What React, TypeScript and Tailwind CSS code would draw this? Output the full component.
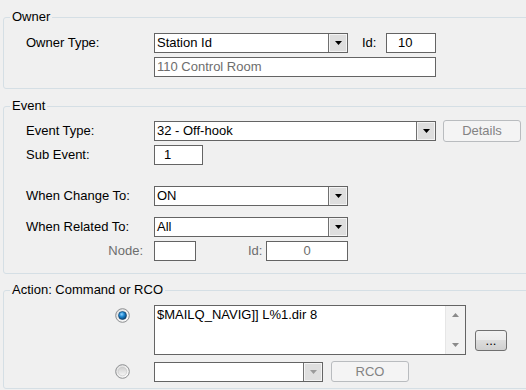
import React from 'react';

// small down arrow used by combo boxes and the scroll bar
const Arrow = ({ up = false, color = '#000' }: { up?: boolean; color?: string }) => (
  <svg width="7" height="4" viewBox="0 0 7 4" className="block">
    {up ? <path d="M0 4 L3.5 0 L7 4 Z" fill={color} /> : <path d="M0 0 L7 0 L3.5 4 Z" fill={color} />}
  </svg>
);

const ComboBox = ({ value, width, disabled = false }: { value: string; width: string; disabled?: boolean }) => (
  <div className={`${width} h-[20px] flex border border-[#646464] bg-white`}>
    <div className="flex-1 pl-[2px] leading-[18px] whitespace-nowrap overflow-hidden">{value}</div>
    <div className="w-[19px] h-full border-l border-[#707070] bg-[#dedede] shadow-[inset_0_0_0_1px_#f4f4f4] flex items-center justify-center">
      <Arrow color={disabled ? '#9a9a9a' : '#000'} />
    </div>
  </div>
);

const TextBox = ({ value, width, className = '' }: { value: string; width: string; className?: string }) => (
  <div className={`${width} h-[20px] border border-[#646464] bg-white leading-[18px] whitespace-nowrap overflow-hidden ${className}`}>
    {value}
  </div>
);

const DisabledButton = ({ label, h }: { label: string; h: string }) => (
  <div className={`w-[78px] ${h} rounded-[3px] border border-[#b9bcbf] bg-[#f4f4f4] text-[#838383] flex items-center justify-center`}>
    {label}
  </div>
);

const Radio = ({ checked }: { checked: boolean }) => (
  <svg width="15" height="15" viewBox="0 0 15 15" className="block">
    <defs>
      <linearGradient id={checked ? 'rg-on' : 'rg-off'} x1="0" y1="0" x2="1" y2="1">
        <stop offset="0" stopColor="#dcdcdc" />
        <stop offset="1" stopColor="#ffffff" />
      </linearGradient>
      <radialGradient id="dot" cx="0.4" cy="0.35" r="0.7">
        <stop offset="0" stopColor="#8fd3ff" />
        <stop offset="0.45" stopColor="#1d86d0" />
        <stop offset="1" stopColor="#0b3d6b" />
      </radialGradient>
      <linearGradient id="inner-off" x1="0" y1="0" x2="0" y2="1">
        <stop offset="0" stopColor="#cfcfcf" />
        <stop offset="1" stopColor="#f6f6f6" />
      </linearGradient>
    </defs>
    <circle cx="7.5" cy="7.5" r="6.8" fill={checked ? 'url(#rg-on)' : 'url(#rg-off)'} stroke="#8c8e90" strokeWidth="1" />
    {checked ? (
      <circle cx="7.5" cy="7.5" r="4" fill="url(#dot)" stroke="#0d3a63" strokeWidth="0.6" />
    ) : (
      <circle cx="7.5" cy="7.5" r="4.3" fill="url(#inner-off)" stroke="#c2c2c2" strokeWidth="0.6" />
    )}
  </svg>
);

const Label = ({ children }: { children: React.ReactNode }) => (
  <div className="w-[128px] shrink-0 whitespace-nowrap">{children}</div>
);

export default function App() {
  return (
    <div className="w-[526px] h-[390px] overflow-hidden bg-[#f0f0f0] text-[13px] text-black font-['Liberation_Sans',Arial,sans-serif]">

      {/* --- OWNER --- */}
      <fieldset className="mt-[10px] ml-[3px] w-[560px] border border-[#d5dfe5] rounded-[3px]">
        <legend className="ml-[6px] px-[2px] leading-[14px]">Owner</legend>
        <div className="pl-[22px] pt-[9px] pb-[11px]">
          <div className="flex items-center h-[20px]">
            <Label>Owner Type:</Label>
            <ComboBox value="Station Id" width="w-[194px]" />
            <div className="ml-[14px] w-[24px]">Id:</div>
            <TextBox value="10" width="w-[50px]" className="pl-[11px]" />
          </div>
          <div className="flex mt-[4px] ml-[128px]">
            <TextBox value="110 Control Room" width="w-[282px]" className="pl-[2px] text-[#6d6d6d]" />
          </div>
        </div>
      </fieldset>

      {/* --- EVENT --- */}
      <fieldset className="mt-[10px] ml-[3px] w-[560px] border border-[#d5dfe5] rounded-[3px]">
        <legend className="ml-[6px] px-[2px] leading-[14px]">Event</legend>
        <div className="pl-[22px] pt-[7px] pb-[12px]">
          <div className="flex items-center h-[22px]">
            <Label>Event Type:</Label>
            <ComboBox value="32 - Off-hook" width="w-[282px]" />
            <div className="ml-[7px]">
              <DisabledButton label="Details" h="h-[22px]" />
            </div>
          </div>
          <div className="flex items-center h-[20px] mt-[3px]">
            <Label>Sub Event:</Label>
            <TextBox value="1" width="w-[49px]" className="pl-[9px]" />
          </div>
          <div className="flex items-center h-[20px] mt-[21px]">
            <Label>When Change To:</Label>
            <ComboBox value="ON" width="w-[194px]" />
          </div>
          <div className="flex items-center h-[20px] mt-[11px]">
            <Label>When Related To:</Label>
            <ComboBox value="All" width="w-[194px]" />
          </div>
          <div className="flex items-center h-[20px] mt-[4px]">
            <div className="w-[128px] shrink-0 pr-[11px] text-right text-[#6d6d6d]">Node:</div>
            <TextBox value="" width="w-[42px]" />
            <div className="ml-[52px] w-[18px] text-[#6d6d6d]">Id:</div>
            <TextBox value="0" width="w-[82px]" className="text-center text-[#6d6d6d]" />
          </div>
        </div>
      </fieldset>

      {/* --- ACTION --- */}
      <fieldset className="mt-[9px] ml-[3px] w-[560px] border border-[#d5dfe5] rounded-[3px]">
        <legend className="ml-[6px] px-[2px] leading-[14px]">Action: Command or RCO</legend>
        <div className="pl-[22px] pt-[8px] pb-[6px]">
          <div className="flex items-start">
            <div className="w-[128px] shrink-0 pl-[89px] pt-[3px]">
              <Radio checked />
            </div>
            <div className="w-[312px] h-[50px] border border-[#646464] bg-white flex">
              <div className="flex-1 pl-[2px] pt-[1px] leading-[15px] whitespace-nowrap">$MAILQ_NAVIG]] L%1.dir 8</div>
              <div className="w-[20px] h-full bg-[#f2f2f2] border-l border-[#e6e6e6] flex flex-col items-center justify-between py-[7px]">
                <Arrow up color="#8a8a8a" />
                <Arrow color="#8a8a8a" />
              </div>
            </div>
            <div className="ml-[9px] mt-[25px] w-[32px] h-[21px] rounded-[3px] border border-[#707070] bg-[linear-gradient(#f2f2f2_0%,#ebebeb_50%,#dddddd_50%,#cfcfcf_100%)] flex items-end justify-center pb-[2px] leading-[14px]">
              ...
            </div>
          </div>
          <div className="flex items-center h-[21px] mt-[6px]">
            <div className="w-[128px] shrink-0 pl-[89px]">
              <Radio checked={false} />
            </div>
            <ComboBox value="" width="w-[169px]" disabled />
            <div className="ml-[8px]">
              <DisabledButton label="RCO" h="h-[21px]" />
            </div>
          </div>
        </div>
      </fieldset>
    </div>
  );
}
